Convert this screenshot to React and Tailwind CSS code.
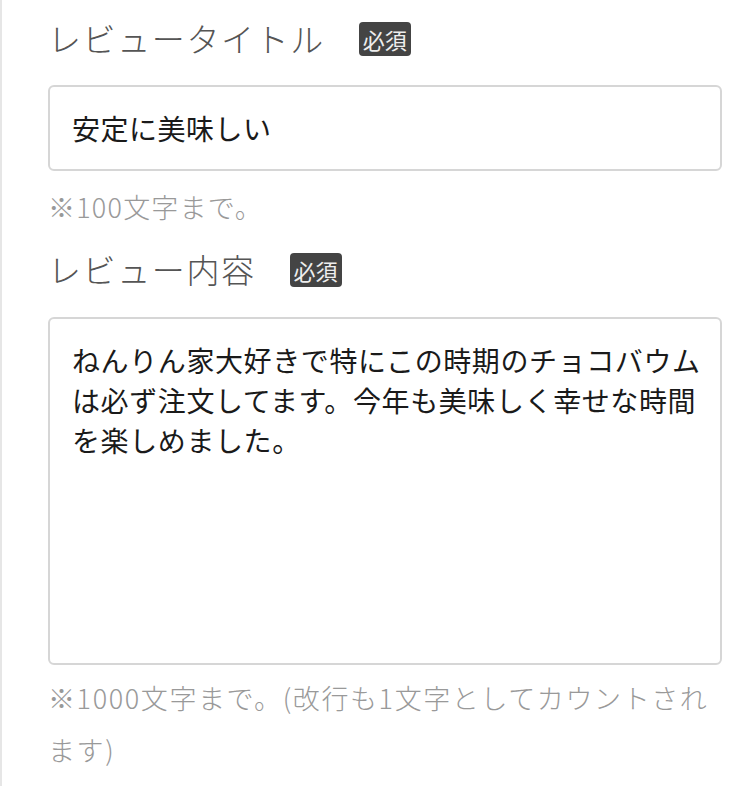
import React from "react";

const font = { fontFamily: '"Noto Sans CJK JP", "Noto Sans", sans-serif' };

function Required() {
  return (
    <span className="inline-flex h-[34px] w-[52px] items-center justify-center rounded-[4px] bg-[#444444] text-[22px] text-[#eeeeee]">
      必須
    </span>
  );
}

function Label({ children }) {
  return (
    <div className="flex items-center gap-[34px]">
      <span className="text-[33px] font-light tracking-[1.6px] text-[#555555]">{children}</span>
      <Required />
    </div>
  );
}

export default function App() {
  const body = [
    "ねんりん家大好きで特にこの時期のチョコバウム",
    "は必ず注文してます。今年も美味しく幸せな時間",
    "を楽しめました。",
  ];

  return (
    <div className="min-h-[786px] bg-white" style={font}>
      <div className="min-h-[786px] border-l-2 border-[#e6e6e6] pl-[46px] pr-[28px]">
        <div className="flex h-[78px] items-center">
          <Label>レビュータイトル</Label>
        </div>

        <div className="mt-[7px] flex h-[86px] items-center rounded-[6px] border-2 border-[#d6d6d6] px-[22px] text-[28px] tracking-[0.5px] text-[#1a1a1a]">
          安定に美味しい
        </div>

        <p className="mt-[18px] text-[27px] font-light leading-[36px] tracking-[1.2px] text-[#999999]">
          ※100文字まで。
        </p>

        <div className="mt-[15px] flex h-[60px] items-center">
          <Label>レビュー内容</Label>
        </div>

        <div className="mt-[17px] h-[348px] rounded-[6px] border-2 border-[#d6d6d6] px-[22px] pt-[21px] text-[28px] leading-[40px] tracking-[0.6px] text-[#1a1a1a]">
          {body.map((line) => (
            <div key={line} className="whitespace-nowrap">
              {line}
            </div>
          ))}
        </div>

        <p className="mt-[7px] text-[27px] font-light leading-[52px] tracking-[1.6px] text-[#999999]">
          ※1000文字まで。(改行も1文字としてカウントされ
          <br />
          ます)
        </p>
      </div>
    </div>
  );
}
